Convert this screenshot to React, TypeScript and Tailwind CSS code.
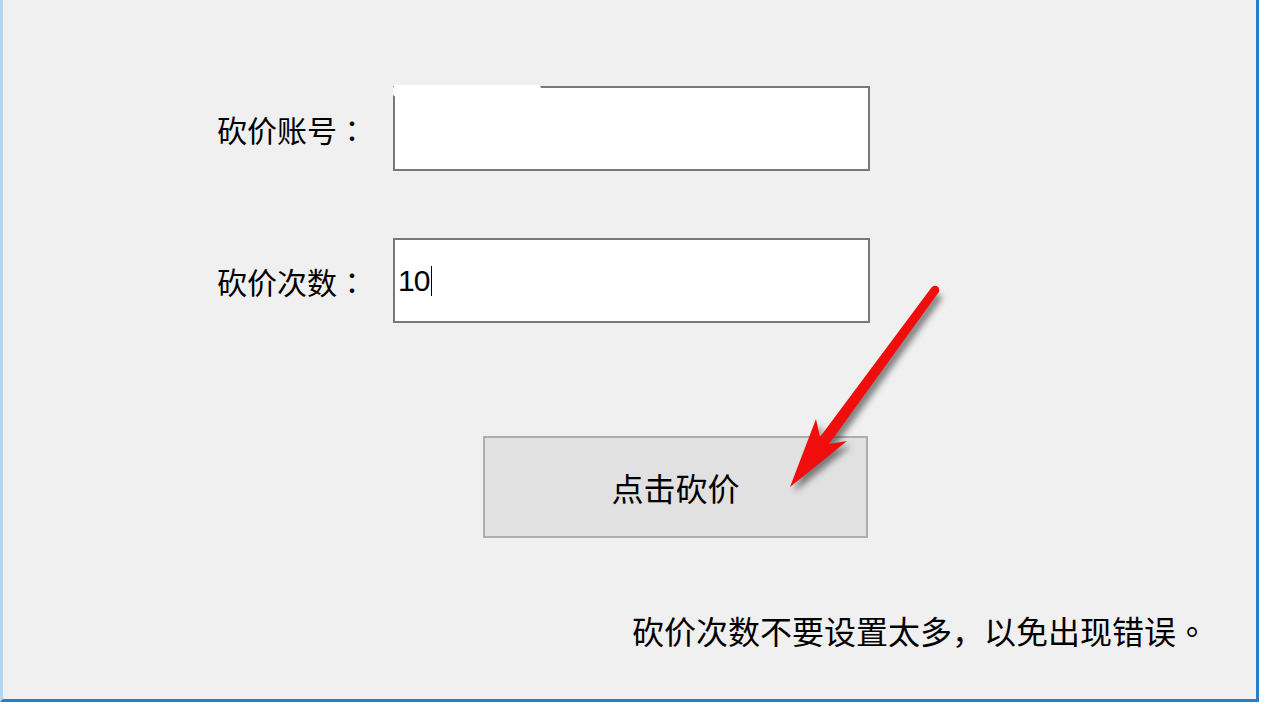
import React from 'react';

const cjk = '"Noto Sans CJK SC", "Noto Sans", sans-serif';
const cjkTc = '"Noto Sans CJK TC", "Noto Sans", sans-serif';

const Arrow = () => (
  <svg
    className="pointer-events-none absolute left-0 top-0"
    width="1266"
    height="704"
    viewBox="0 0 1266 704"
  >
    <defs>
      <filter id="shadow" x="-20%" y="-20%" width="140%" height="140%">
        <feGaussianBlur stdDeviation="3" />
      </filter>
    </defs>
    <g transform="translate(4 5)" filter="url(#shadow)" opacity="0.6">
      <polygon
        points="790,487 847,441 829,444 938.5,292.6 931.5,287.4 820,437 816,419"
        fill="#333"
      />
    </g>
    <polygon
      points="790,487 847,441 829,444 938.5,292.6 931.5,287.4 820,437 816,419"
      fill="#f20d0d"
    />
    <circle cx="935" cy="290" r="4.3" fill="#f20d0d" />
  </svg>
);

export default function App() {
  return (
    <div className="relative h-[704px] w-[1266px] overflow-hidden bg-white">
      <div
        className="h-[702px] w-[1259px] border-b-[3px] border-l-[3px] border-r-[3px] border-b-[#2a7fc4] border-l-[#b3d6f2] border-r-[#2a7fc4] bg-[#f0f0f0] pl-[214px] pt-[86px] text-black"
        style={{ fontFamily: cjk }}
      >
        <div className="flex items-center">
          <div className="w-[176px] text-[30px] leading-none">
            砍价账号<span style={{ fontFamily: cjkTc }}>：</span>
          </div>
          <div className="relative h-[85px] w-[477px] border-2 border-[#787878] bg-white">
            <div className="absolute -top-[3px] -left-[2px] h-[12px] w-[148px] rounded-sm bg-white" />
          </div>
        </div>

        <div className="mt-[67px] flex items-center">
          <div className="w-[176px] text-[30px] leading-none">
            砍价次数<span style={{ fontFamily: cjkTc }}>：</span>
          </div>
          <div className="flex h-[85px] w-[477px] items-center border-2 border-[#787878] bg-white pl-[3px]">
            <span
              className="text-[30px] leading-none tracking-[-1px]"
              style={{ fontFamily: '"Liberation Sans", Arial, sans-serif' }}
            >
              10
            </span>
            <span className="ml-[2px] h-[30px] w-px bg-black" />
          </div>
        </div>

        <button className="ml-[266px] mt-[113px] flex h-[102px] w-[385px] items-center justify-center border-2 border-[#adadad] bg-[#e1e1e1] text-[32px] leading-none">
          点击砍价
        </button>

        <div className="ml-[415px] mt-[76px] text-[32px] leading-none">
          砍价次数不要设置太多，以免出现错误<span style={{ fontFamily: cjkTc }}>。</span>
        </div>
      </div>
      <Arrow />
    </div>
  );
}
